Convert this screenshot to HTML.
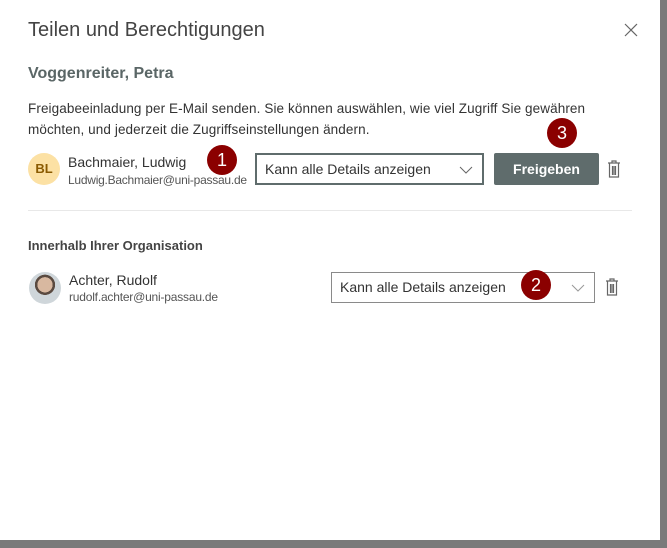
<!DOCTYPE html>
<html><head><meta charset="utf-8"><style>
body{margin:0;width:667px;height:548px;background:#7a7a7a;position:relative;overflow:hidden;font-family:"Liberation Sans",sans-serif;color:#333}
.dlg{position:absolute;left:0;top:0;width:660px;height:540px;background:#fff}
.a{position:absolute;white-space:nowrap}
.badge{position:absolute;width:30px;height:30px;border-radius:50%;background:#8b0000;color:#fff;font-size:18px;text-align:center;line-height:30px}
.dd{position:absolute;border:1px solid #666;box-sizing:border-box;font-size:14px;padding-left:8px;line-height:30px;background:#fff}
.dd svg{position:absolute;right:9px;top:11px}
</style></head><body>
<div class="dlg">
<div class="a" style="left:28px;top:19px;font-size:20px;font-weight:300;color:#444">Teilen und Berechtigungen</div>
<svg class="a" style="left:624px;top:23px" width="14" height="14"><path d="M1 1L13 13M13 1L1 13" stroke="#666" stroke-width="1.2"/></svg>
<div class="a" style="left:28px;top:65px;font-size:16px;font-weight:bold;color:#5a6666">Voggenreiter, Petra</div>
<div class="a" style="left:28px;top:98px;font-size:13.5px;line-height:21px;letter-spacing:0.1px">Freigabeeinladung per E-Mail senden. Sie können auswählen, wie viel Zugriff Sie gewähren<br>möchten, und jederzeit die Zugriffseinstellungen ändern.</div>
<div class="a" style="left:28px;top:153px;width:32px;height:32px;border-radius:50%;background:#fce1a4;color:#8a5a00;font-size:13px;font-weight:bold;text-align:center;line-height:32px">BL</div>
<div class="a" style="left:68px;top:154px;font-size:14px">Bachmaier, Ludwig</div>
<div class="a" style="left:68px;top:173px;font-size:12px;color:#555;letter-spacing:-0.25px">Ludwig.Bachmaier@uni-passau.de</div>
<div class="dd" style="left:255px;top:153px;width:229px;height:32px;border:2px solid #5f6c6c;line-height:28px">Kann alle Details anzeigen<svg width="14" height="8"><path d="M1 1L7 7L13 1" stroke="#666" fill="none"/></svg></div>
<div class="a" style="left:494px;top:153px;width:105px;height:32px;background:#5f6c6c;border-radius:2px;color:#fff;font-size:14px;font-weight:bold;text-align:center;line-height:32px">Freigeben</div>
<svg class="a" style="left:607px;top:160px" width="14" height="18"><path d="M1 3H13M5 3V1H9V3M2.5 3V17H11.5V3M5.5 6V15M7 6V15M8.5 6V15" stroke="#666" fill="none" stroke-width="1.2"/></svg>
<div class="a" style="left:28px;top:210px;width:604px;height:1px;background:#e8e8e8"></div>
<div class="a" style="left:28px;top:238px;font-size:13px;font-weight:bold;color:#444">Innerhalb Ihrer Organisation</div>
<div class="a" style="left:29px;top:272px;width:32px;height:32px;border-radius:50%;background:radial-gradient(circle at 50% 40%,#d8b8a0 0 30%,#5a4a40 31% 40%,#cfd6da 41%);overflow:hidden"></div>
<div class="a" style="left:69px;top:272px;font-size:14px">Achter, Rudolf</div>
<div class="a" style="left:69px;top:290px;font-size:12px;color:#555;letter-spacing:-0.2px">rudolf.achter@uni-passau.de</div>
<div class="dd" style="left:331px;top:272px;width:264px;height:31px;border-color:#8a8a8a;line-height:29px">Kann alle Details anzeigen<svg width="14" height="8"><path d="M1 1L7 7L13 1" stroke="#999" fill="none"/></svg></div>
<svg class="a" style="left:605px;top:278px" width="14" height="18"><path d="M1 3H13M5 3V1H9V3M2.5 3V17H11.5V3M5.5 6V15M7 6V15M8.5 6V15" stroke="#666" fill="none" stroke-width="1.2"/></svg>
<div class="badge" style="left:207px;top:145px">1</div>
<div class="badge" style="left:521px;top:270px">2</div>
<div class="badge" style="left:547px;top:118px">3</div>
</div>
</body></html>
